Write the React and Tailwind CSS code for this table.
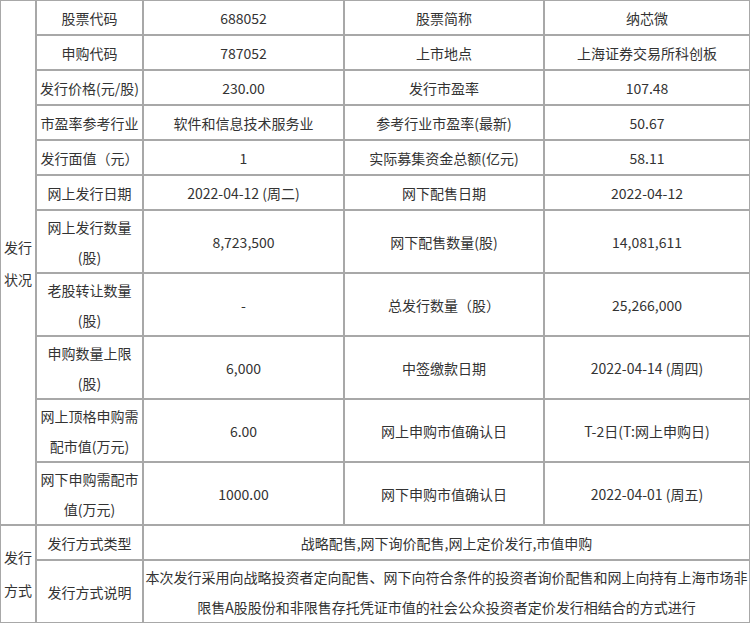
import React from "react";

const rows = [
  [["股票代码"], ["688052"], ["股票简称"], ["纳芯微"]],
  [["申购代码"], ["787052"], ["上市地点"], ["上海证券交易所科创板"]],
  [["发行价格(元/股)"], ["230.00"], ["发行市盈率"], ["107.48"]],
  [["市盈率参考行业"], ["软件和信息技术服务业"], ["参考行业市盈率(最新)"], ["50.67"]],
  [["发行面值（元）"], ["1"], ["实际募集资金总额(亿元)"], ["58.11"]],
  [["网上发行日期"], ["2022-04-12 (周二)"], ["网下配售日期"], ["2022-04-12"]],
  [["网上发行数量", "(股)"], ["8,723,500"], ["网下配售数量(股)"], ["14,081,611"]],
  [["老股转让数量", "(股)"], ["-"], ["总发行数量（股）"], ["25,266,000"]],
  [["申购数量上限", "(股)"], ["6,000"], ["中签缴款日期"], ["2022-04-14 (周四)"]],
  [["网上顶格申购需", "配市值(万元)"], ["6.00"], ["网上申购市值确认日"], ["T-2日(T:网上申购日)"]],
  [["网下申购需配市", "值(万元)"], ["1000.00"], ["网下申购市值确认日"], ["2022-04-01 (周五)"]],
];

const Cell = ({ lines, className = "" }) => (
  <div
    className={`bg-white flex flex-col items-center justify-center text-center whitespace-nowrap ${className}`}
  >
    {lines.map((l, i) => (
      <span key={i}>{l}</span>
    ))}
  </div>
);

const App = () => {
  return (
    <div className="w-[750px] bg-white font-['Noto_Sans_CJK_SC','Noto_Sans',sans-serif] text-[14px] leading-[30px] text-[#333]">
      <div className="grid grid-cols-[34px_105px_199px_198px_204px] grid-rows-[repeat(6,33px)_repeat(5,61px)_33px_61px] gap-[2px] p-px bg-[#a8a8a8]">
        <Cell lines={["发行", "状况"]} className="row-span-11 leading-[32px]" />
        {rows.map((r, i) =>
          r.map((c, j) => <Cell key={`${i}-${j}`} lines={c} />)
        )}
        <Cell lines={["发行", "方式"]} className="row-span-2 leading-[33px]" />
        <Cell lines={["发行方式类型"]} />
        <Cell
          lines={["战略配售,网下询价配售,网上定价发行,市值申购"]}
          className="col-span-3"
        />
        <Cell lines={["发行方式说明"]} />
        <Cell
          lines={[
            "本次发行采用向战略投资者定向配售、网下向符合条件的投资者询价配售和网上向持有上海市场非",
            "限售A股股份和非限售存托凭证市值的社会公众投资者定价发行相结合的方式进行",
          ]}
          className="col-span-3"
        />
      </div>
    </div>
  );
};

export default App;
